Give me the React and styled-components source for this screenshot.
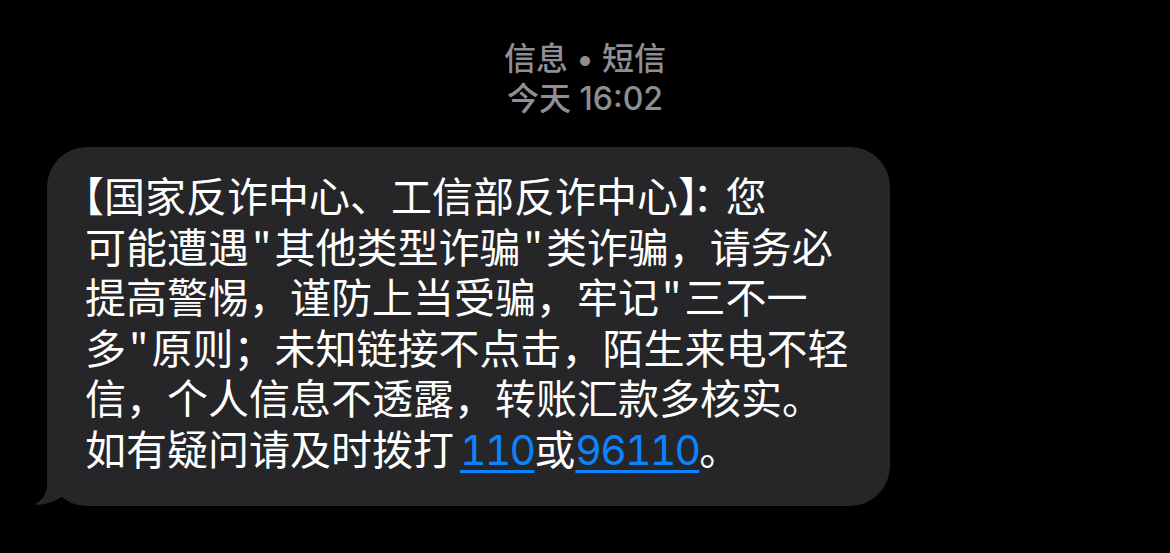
import styled, { createGlobalStyle } from 'styled-components';

const GlobalStyle = createGlobalStyle`
  html, body {
    margin: 0;
    padding: 0;
    background: #000;
  }
  body {
    width: 1170px;
    height: 553px;
    overflow: hidden;
  }
`;

const Screen = styled.div`
  display: flex;
  flex-direction: column;
  height: 553px;
  padding-top: 39px;
  box-sizing: border-box;
  background: #000;
`;

const Header = styled.header`
  display: flex;
  flex-direction: column;
  align-items: center;
  font-family: Inter, 'Noto Sans CJK SC', sans-serif;
  font-size: 32px;
  font-weight: 500;
  line-height: 39.5px;
  color: #8e8e93;
`;

const Thread = styled.div`
  display: flex;
  padding: 29px 0 0 47px;
`;

const Bubble = styled.div`
  position: relative;
  width: 843px;
  box-sizing: border-box;
  padding: 22px 38px 33px;
  border-radius: 40px;
  background: #262628;
  color: #fff;
  font-family: 'Noto Sans CJK SC', sans-serif;
  font-size: 41px;
  line-height: 50.6px;
`;

const Tail = styled.svg`
  position: absolute;
  left: -14px;
  bottom: 0;
  width: 60px;
  height: 40px;
  overflow: visible;
`;

const Line = styled.div`
  white-space: nowrap;
  text-indent: ${p => (p.$lead ? '-22px' : '0')};
`;

// punctuation pair squeezed as iOS does
const Squeeze = styled.span`
  letter-spacing: ${p => p.$by}px;
`;

const Quote = styled.span`
  padding: 0 3px;
`;

const PhoneLink = styled.a`
  padding-left: ${p => p.$gap || 0}px;
  font-family: Inter, 'Noto Sans CJK SC', sans-serif;
  font-variant-numeric: tabular-nums;
  letter-spacing: -1.8px;
  line-height: 1;
  color: #0a84ff;
  text-decoration: underline;
  text-decoration-thickness: 2.5px;
  text-underline-offset: 5px;
`;

const q = <Quote>"</Quote>;

export default function App() {
  return (
    <>
      <GlobalStyle />
      <Screen>
        <Header>
          <div>信息 • 短信</div>
          <div>今天 16:02</div>
        </Header>
        <Thread>
          <Bubble>
            <Tail viewBox="0 0 60 40">
              <path
                d="M14,0 L14,18 C14,28 9,35 1,38.5 C12,39.5 24,35 31,29 L54,0 Z"
                fill="#262628"
              />
            </Tail>
            <Line $lead>
              【国家反诈中心、工信部反诈中心<Squeeze $by={-6}>】</Squeeze>
              <Squeeze $by={-8}>：</Squeeze>您
            </Line>
            <Line>可能遭遇{q}其他类型诈骗{q}类诈骗，请务必</Line>
            <Line>提高警惕，谨防上当受骗，牢记{q}三不一</Line>
            <Line>多{q}原则；未知链接不点击，陌生来电不轻</Line>
            <Line>信，个人信息不透露，转账汇款多核实。</Line>
            <Line>
              如有疑问请及时拨打
              <PhoneLink href="tel:110" $gap={6}>110</PhoneLink>或
              <PhoneLink href="tel:96110">96110</PhoneLink>。
            </Line>
          </Bubble>
        </Thread>
      </Screen>
    </>
  );
}
